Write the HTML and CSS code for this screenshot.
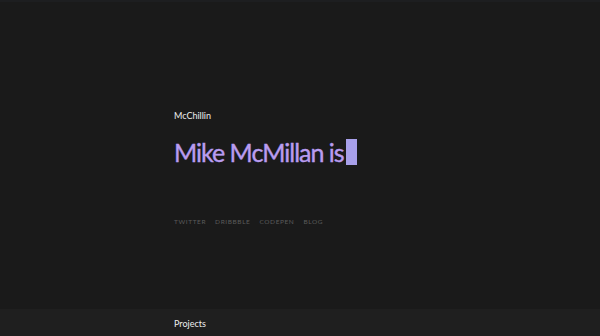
FILE: index.html
```html
<!DOCTYPE html>
<html lang="en">
<head>
    <meta charset="UTF-8" />
    <meta name="viewport" content="width=device-width, initial-scale=1" />
    <title>McChillin</title>
    <link rel="stylesheet" href="styles.css">
</head>
<body>
    <header class="hero">
        <div class="wrap">
            <p class="brand">McChillin</p>
            <h1 class="headline">Mike McMillan is <span class="cursor"></span></h1>
            <nav class="links">
                <a href="#">Twitter</a>
                <a href="#">Dribbble</a>
                <a href="#">Codepen</a>
                <a href="#">Blog</a>
            </nav>
        </div>
    </header>
    <section class="projects">
        <div class="wrap">
            <h2>Projects</h2>
        </div>
    </section>
</body>
</html>
```

FILE: styles.css
```css
:root {
    --bg: #1a1a1a;
    --bg-alt: #1f1f1f;
    --text: #eeeeee;
    --accent: #b99cf0;
    --caret: #a8a0ea;
    --muted: #5a5a5a;
}
* {
    box-sizing: border-box;
}
body {
    margin: 0;
    font-family: Lato, "Noto Sans", sans-serif;
    background-color: var(--bg);
    color: var(--text);
}
.wrap {
    width: 252px;
    margin: 0 auto;
}
.hero {
    height: 309px;
    padding-top: 108px;
    border-top: 2px solid #1d1e20;
}
.brand {
    margin: 0;
    font-size: 9px;
    line-height: 12px;
}
.headline {
    margin: 15px 0 0;
    font-size: 25px;
    line-height: 30px;
    font-weight: 400;
    letter-spacing: -1px;
    -webkit-text-stroke: 0.4px var(--accent);
    color: var(--accent);
    white-space: nowrap;
    display: flex;
    align-items: center;
    gap: 2px;
}
.cursor {
    display: inline-block;
    width: 11px;
    height: 26px;
    background-color: var(--caret);
    -webkit-text-stroke: 0;
}
.links {
    margin-top: 51px;
    display: flex;
    gap: 9px;
}
.links a {
    color: var(--muted);
    text-decoration: none;
    text-transform: uppercase;
    font-size: 6.5px;
    letter-spacing: 0.6px;
}
.projects {
    background-color: var(--bg-alt);
    height: 40px;
    padding-top: 9px;
}
.projects h2 {
    margin: 0;
    font-size: 9px;
    line-height: 12px;
    font-weight: 400;
}
```
